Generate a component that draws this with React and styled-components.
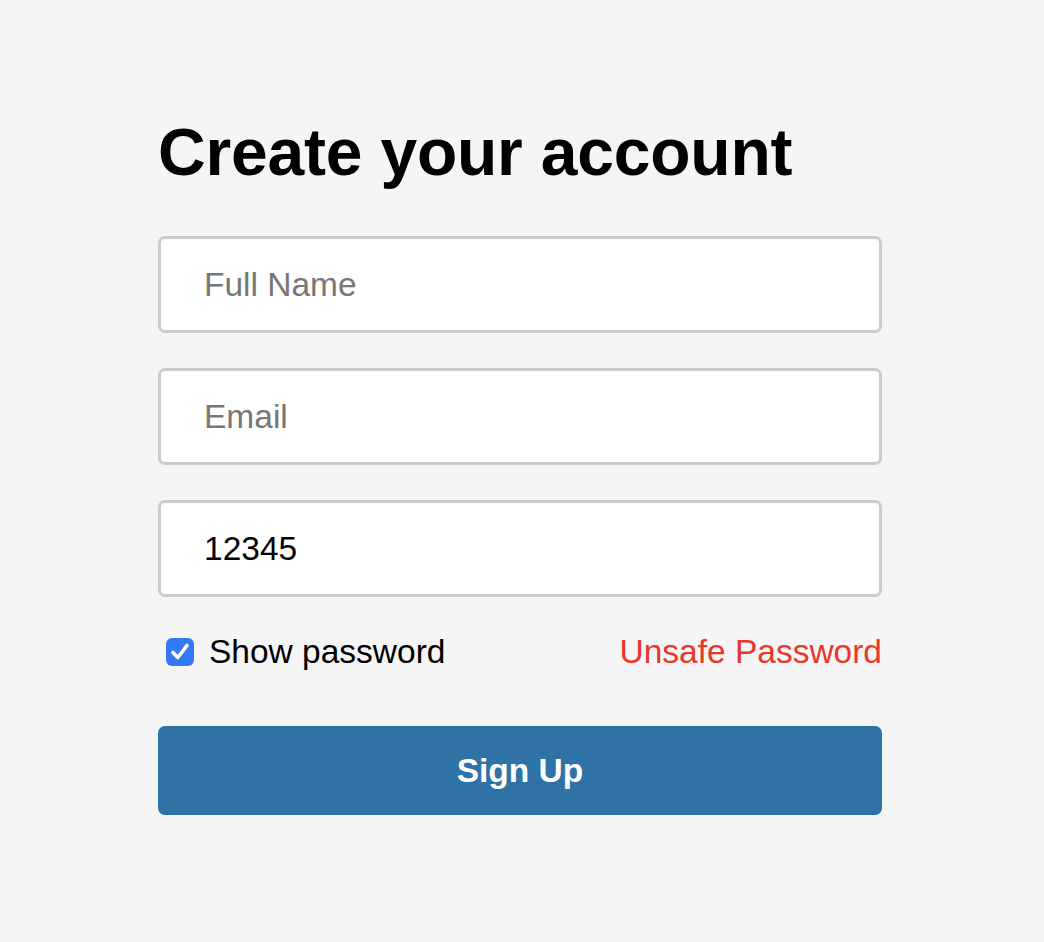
import styled, { createGlobalStyle } from 'styled-components'
import { useState } from 'react'

const GlobalStyle = createGlobalStyle`
  html, body {
    margin: 0;
    padding: 0;
    background: #f5f5f5;
  }
  body {
    font-family: "Liberation Sans", Arial, Helvetica, sans-serif;
  }
`

export default function App() {
  const [password, setPassword] = useState("12345")
  const [show, setShow] = useState(true)

  return (
    <>
      <GlobalStyle />
      <Page>
        <Form onSubmit={(e) => e.preventDefault()}>
          <Title>Create your account</Title>
          <Field type="text" placeholder="Full Name" />
          <Field type="email" placeholder="Email" />
          <Field
            type={show ? "text" : "password"}
            placeholder="Password"
            value={password}
            onChange={(e) => setPassword(e.target.value)}
          />
          <OptionsRow>
            <CheckLabel onClick={() => setShow(!show)}>
              <CheckBox checked={show}>
                {show && (
                  <svg width="28" height="28" viewBox="0 0 28 28">
                    <path d="M7 14.5 L11.8 19.5 L21 7.5" fill="none" stroke="#fff" strokeWidth="3.6" strokeLinecap="round" strokeLinejoin="round" />
                  </svg>
                )}
              </CheckBox>
              Show password
            </CheckLabel>
            {password.length < 8 && <Warning>Unsafe Password</Warning>}
          </OptionsRow>
          <SubmitButton type="submit">Sign Up</SubmitButton>
        </Form>
      </Page>
    </>
  )
}

const Page = styled.div`
  min-height: 942px;
  padding: 114px 0 0 158px;
  box-sizing: border-box;
`

const Form = styled.form`
  width: 724px;
  display: flex;
  flex-direction: column;
`

const Title = styled.h1`
  margin: 0 0 46px;
  font-size: 66px;
  line-height: 76px;
  font-weight: 700;
  color: #000;
  letter-spacing: -0.2px;
`

const Field = styled.input`
  height: 97px;
  box-sizing: border-box;
  margin: 0 0 35px;
  padding: 0 20px 0 43px;
  border: 3px solid #cbcbcb;
  border-radius: 7px;
  background: #fff;
  font-family: inherit;
  font-size: 33.5px;
  color: #000;
  outline: none;

  &::placeholder {
    color: #777;
  }
  &:last-of-type {
    margin-bottom: 0;
  }
`

const OptionsRow = styled.div`
  margin-top: 36px;
  height: 38px;
  display: flex;
  align-items: center;
  justify-content: space-between;
`

const CheckLabel = styled.label`
  display: flex;
  align-items: center;
  gap: 15px;
  padding-left: 8px;
  font-size: 33.5px;
  color: #000;
  cursor: pointer;
  user-select: none;
`

const CheckBox = styled.span`
  width: 28px;
  height: 28px;
  box-sizing: border-box;
  border-radius: 6px;
  display: grid;
  place-items: center;
  background: ${({ checked }) => (checked ? "#3478f6" : "#fff")};
  border: ${({ checked }) => (checked ? "none" : "2px solid #999")};
`

const Warning = styled.span`
  font-size: 33.5px;
  color: #e8372b;
`

const SubmitButton = styled.button`
  margin-top: 55px;
  height: 89px;
  border: none;
  border-radius: 7px;
  background: #2f72a5;
  color: #fff;
  font-family: inherit;
  font-size: 33.5px;
  font-weight: 700;
  cursor: pointer;
`
